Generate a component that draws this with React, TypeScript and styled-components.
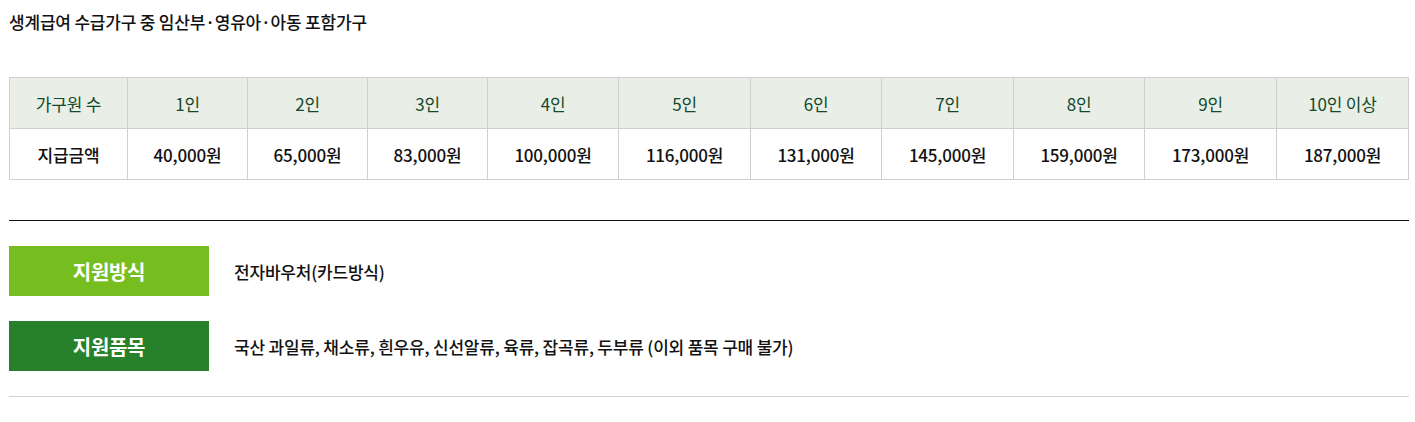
import * as React from "react";
import styled, { createGlobalStyle } from "styled-components";

const GlobalStyle = createGlobalStyle`
  body {
    margin: 0;
    background: #fff;
    font-family: "Noto Sans CJK KR", "Noto Sans", sans-serif;
    color: #111;
  }
`;

const Page = styled.div`
  padding: 10px 6px 0 9px;
`;

const Title = styled.h3`
  margin: 0;
  font-size: 17px;
  line-height: 24px;
  font-weight: 500;
  letter-spacing: -0.2px;
`;

const Table = styled.table`
  margin-top: 43px;
  width: 100%;
  border-collapse: collapse;
  table-layout: fixed;
`;

const HeadCell = styled.th`
  height: 50px;
  padding: 0;
  background: #e9eee6;
  border: 1px solid #cfcfcf;
  color: #124a2c;
  font-size: 17px;
  font-weight: 400;
  letter-spacing: -0.2px;
  text-align: center;
`;

const Cell = styled.td`
  height: 50px;
  padding: 0;
  border: 1px solid #cfcfcf;
  color: #111;
  font-size: 17px;
  font-weight: 500;
  letter-spacing: -0.2px;
  text-align: center;
`;

const Rule = styled.hr<{ $strong?: boolean }>`
  margin: 0;
  border: 0;
  height: 1px;
  background: ${(p) => (p.$strong ? "#111" : "#d2d2d2")};
`;

const Divider = styled(Rule)`
  margin-top: 40px;
`;

const InfoList = styled.div`
  display: flex;
  flex-direction: column;
  gap: 25px;
  padding: 25px 0;
`;

const InfoRow = styled.div`
  display: flex;
  align-items: center;
  gap: 25px;
`;

const Badge = styled.div<{ $tone: string }>`
  width: 200px;
  height: 50px;
  display: flex;
  align-items: center;
  justify-content: center;
  background: ${(p) => p.$tone};
  color: #fff;
  font-size: 20px;
  font-weight: 700;
  letter-spacing: -0.3px;
`;

const InfoText = styled.p`
  margin: 0;
  font-size: 17px;
  font-weight: 500;
  letter-spacing: -0.2px;
`;

const widths = [118, 120, 120, 120, 131, 132, 131, 132, 131, 132, 132];
const heads = ["가구원 수", "1인", "2인", "3인", "4인", "5인", "6인", "7인", "8인", "9인", "10인 이상"];
const amounts = [
  "지급금액",
  "40,000원",
  "65,000원",
  "83,000원",
  "100,000원",
  "116,000원",
  "131,000원",
  "145,000원",
  "159,000원",
  "173,000원",
  "187,000원",
];

const info = [
  { label: "지원방식", tone: "#76be1f", text: "전자바우처(카드방식)" },
  {
    label: "지원품목",
    tone: "#27802a",
    text: "국산 과일류, 채소류, 흰우유, 신선알류, 육류, 잡곡류, 두부류 (이외 품목 구매 불가)",
  },
];

export default function App() {
  return (
    <>
      <GlobalStyle />
      <Page>
        <Title>생계급여 수급가구 중 임산부·영유아·아동 포함가구</Title>
        <Table>
          <colgroup>
            {widths.map((w, i) => (
              <col key={i} style={{ width: w }} />
            ))}
          </colgroup>
          <thead>
            <tr>
              {heads.map((h) => (
                <HeadCell key={h}>{h}</HeadCell>
              ))}
            </tr>
          </thead>
          <tbody>
            <tr>
              {amounts.map((a) => (
                <Cell key={a}>{a}</Cell>
              ))}
            </tr>
          </tbody>
        </Table>
        <Divider $strong />
        <InfoList>
          {info.map((row) => (
            <InfoRow key={row.label}>
              <Badge $tone={row.tone}>{row.label}</Badge>
              <InfoText>{row.text}</InfoText>
            </InfoRow>
          ))}
        </InfoList>
        <Rule />
      </Page>
    </>
  );
}
